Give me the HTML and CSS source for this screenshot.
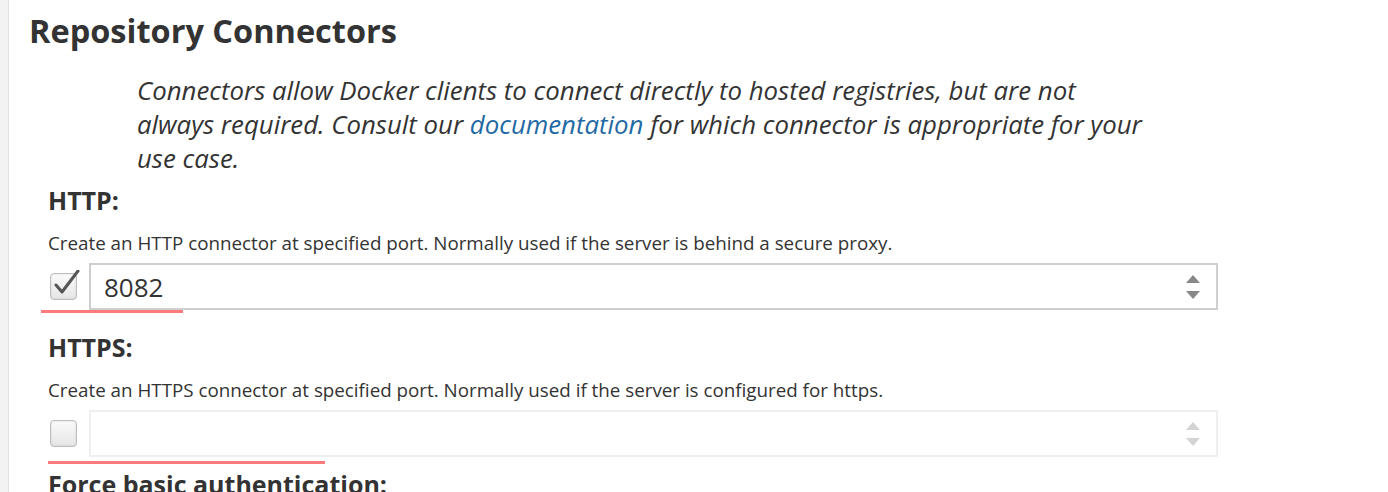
FILE: index.html
```html
<!DOCTYPE html>
<html lang="en">
<head>
    <meta charset="UTF-8">
    <meta name="viewport" content="width=device-width, initial-scale=1.0">
    <title>Repository Connectors</title>
    <link rel="stylesheet" href="styles.css">
</head>
<body>

    <div class="page">
        <!-- Left gutter -->
        <div class="gutter"></div>

        <!-- Main Content -->
        <div class="content">
            <h1>Repository Connectors</h1>

            <p class="intro">
                Connectors allow Docker clients to connect directly to hosted registries, but are not<br>
                always required. Consult our <a href="#">documentation</a> for which connector is appropriate for your<br>
                use case.
            </p>

            <!-- HTTP -->
            <div class="field first">
                <h3>HTTP:</h3>
                <p class="help">Create an HTTP connector at specified port. Normally used if the server is behind a secure proxy.</p>
                <div class="field-row">
                    <span class="check checked">
                        <svg width="30" height="30" viewBox="0 0 30 30">
                            <path d="M5 15 L11 22 L27 1" fill="none" stroke="#555" stroke-width="3" stroke-linecap="round" stroke-linejoin="round"/>
                        </svg>
                    </span>
                    <div class="number-field">
                        <span class="value">8082</span>
                        <svg class="spinner" width="16" height="26" viewBox="0 0 16 26">
                            <path d="M1 9 L8 1 L15 9 Z M1 17 L15 17 L8 25 Z" fill="#888"/>
                        </svg>
                    </div>
                </div>
                <div class="error-line short"></div>
            </div>

            <!-- HTTPS -->
            <div class="field">
                <h3>HTTPS:</h3>
                <p class="help">Create an HTTPS connector at specified port. Normally used if the server is configured for https.</p>
                <div class="field-row">
                    <span class="check"></span>
                    <div class="number-field disabled">
                        <span class="value"></span>
                        <svg class="spinner" width="16" height="26" viewBox="0 0 16 26">
                            <path d="M1 9 L8 1 L15 9 Z M1 17 L15 17 L8 25 Z" fill="#d4d4d4"/>
                        </svg>
                    </div>
                </div>
                <div class="error-line long"></div>
            </div>

            <div class="field last">
                <h3>Force basic authentication:</h3>
            </div>
        </div>
    </div>

</body>
</html>
```

FILE: styles.css
```css
/* Global Styles */
* {
    margin: 0;
    padding: 0;
    box-sizing: border-box;
}

body {
    font-family: "Open Sans", Lato, Arial, sans-serif;
    color: #333;
    background-color: #fff;
    overflow: hidden;
}

.page {
    display: flex;
    min-height: 492px;
}

/* Left gutter */
.gutter {
    width: 9px;
    flex-shrink: 0;
    background-color: #f3f3f3;
    border-right: 1px solid #e2e2e2;
}

.content {
    flex: 1;
    padding: 11px 0 0 20px;
}

h1 {
    font-size: 32.5px;
    font-weight: bold;
    line-height: 40px;
    color: #333;
}

.intro {
    margin: 22px 0 0 108px;
    font-size: 25.8px;
    font-style: italic;
    line-height: 34px;
    color: #333;
    white-space: nowrap;
}

.intro a {
    color: #1f6aa5;
    text-decoration: none;
}

/* Fields */
.field {
    margin-left: 19px;
}

.field h3 {
    font-size: 25px;
    font-weight: bold;
    line-height: 24px;
    margin-top: 22px;
}

.field.first h3 {
    margin-top: 13px;
}

.field.last h3 {
    margin-top: 8px;
}

.help {
    font-size: 18.8px;
    line-height: 20px;
    margin-top: 21px;
}

.field-row {
    display: flex;
    align-items: center;
    gap: 12px;
    margin-top: 10px;
}

/* Checkbox */
.check {
    width: 27px;
    height: 27px;
    margin-left: 2px;
    border: 1px solid #bdbdbd;
    border-radius: 4px;
    background: linear-gradient(#fafafa, #e6e6e6);
    box-shadow: inset 0 0 2px rgba(0,0,0,0.15);
    position: relative;
}

.check svg {
    position: absolute;
    left: 0;
    top: -4px;
}

/* Number input */
.number-field {
    width: 1129px;
    height: 47px;
    border: 2px solid #cfcfcf;
    display: flex;
    align-items: center;
    padding: 0 15px 0 13px;
    font-size: 26px;
}

.number-field.disabled {
    border-color: #efefef;
}

.spinner {
    margin-left: auto;
}

/* Validation underline */
.error-line {
    height: 3px;
    background-color: #ff7b7b;
}

.error-line.short {
    width: 142px;
    margin-left: -7px;
}

.error-line.long {
    width: 277px;
    margin-top: 4px;
}
```
